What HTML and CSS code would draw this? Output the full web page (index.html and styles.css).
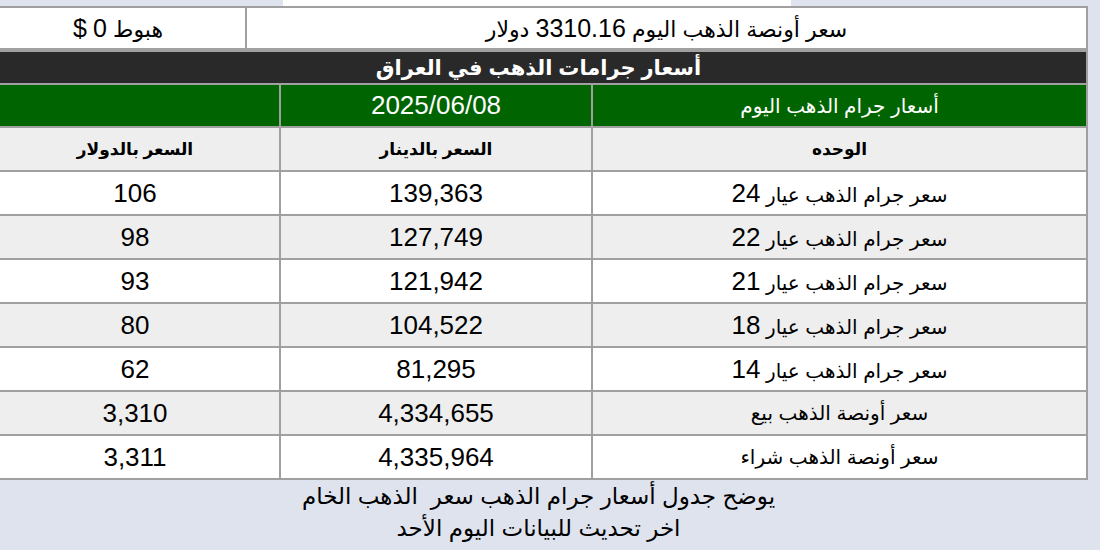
FILE: index.html
```html
<!DOCTYPE html>
<html lang="ar" dir="rtl">
<head>
<meta charset="utf-8">
<title>أسعار جرامات الذهب في العراق</title>
<link rel="stylesheet" href="styles.css">
</head>
<body>
<div class="topstrip"><div class="topstrip-white"></div></div>
<div class="wrap">
  <table class="ounce">
    <colgroup><col class="col-price"><col></colgroup>
    <tr>
      <td class="ounce-price">سعر أونصة الذهب اليوم <span class="n">3310.16</span> دولار</td>
      <td class="ounce-change">هبوط <span class="n">0</span> <span class="n">$</span></td>
    </tr>
  </table>
  <table class="prices">
    <colgroup><col class="col-unit"><col class="col-iqd"><col></colgroup>
    <tr class="title-row"><td colspan="3">أسعار جرامات الذهب في العراق</td></tr>
    <tr class="green-row">
      <td>أسعار جرام الذهب اليوم</td>
      <td class="n">2025/06/08</td>
      <td></td>
    </tr>
    <tr class="head-row alt">
      <td>الوحده</td>
      <td>السعر بالدينار</td>
      <td>السعر بالدولار</td>
    </tr>
    <tr><td>سعر جرام الذهب عيار <span class="n">24</span></td><td class="n">139,363</td><td class="n">106</td></tr>
    <tr class="alt"><td>سعر جرام الذهب عيار <span class="n">22</span></td><td class="n">127,749</td><td class="n">98</td></tr>
    <tr><td>سعر جرام الذهب عيار <span class="n">21</span></td><td class="n">121,942</td><td class="n">93</td></tr>
    <tr class="alt"><td>سعر جرام الذهب عيار <span class="n">18</span></td><td class="n">104,522</td><td class="n">80</td></tr>
    <tr><td>سعر جرام الذهب عيار <span class="n">14</span></td><td class="n">81,295</td><td class="n">62</td></tr>
    <tr class="alt"><td>سعر أونصة الذهب بيع</td><td class="n">4,334,655</td><td class="n">3,310</td></tr>
    <tr><td>سعر أونصة الذهب شراء</td><td class="n">4,335,964</td><td class="n">3,311</td></tr>
  </table>
  <div class="caption">
    <p>يوضح جدول أسعار جرام الذهب سعر&nbsp; الذهب الخام</p>
    <p>اخر تحديث للبيانات اليوم الأحد</p>
  </div>
</div>
</body>
</html>
```

FILE: styles.css
```css
html, body {
  margin: 0;
  padding: 0;
}
body {
  background: #dfe3ee;
  font-family: "Liberation Sans", "DejaVu Sans", Arial, sans-serif;
  color: #000;
  overflow: hidden;
}
.topstrip {
  height: 6px;
  display: flex;
}
.topstrip-white {
  width: 508px;
  margin-right: 309px;
  background: #ffffff;
}
.wrap {
  width: 1099px;
  margin-right: 12px;
}
table {
  border-collapse: collapse;
  width: 100%;
  table-layout: fixed;
}
td {
  border: 2px solid #a0a0a0;
  padding: 0;
  text-align: center;
  vertical-align: middle;
  font-size: 20px;
  white-space: nowrap;
}
.n {
  font-size: 26px;
}
.ounce {
  background: #ffffff;
}
.ounce .col-price { width: 841px; }
.ounce td {
  height: 40px;
  font-size: 22px;
}
.ounce td .n {
  font-size: 25px;
}
.prices .col-unit { width: 495px; }
.prices .col-iqd { width: 312px; }
.prices td {
  height: 42px;
}
.prices tr {
  background: #ffffff;
}
.prices tr.alt {
  background: #eeeeee;
}
.title-row td {
  background: #292929;
  color: #ffffff;
  font-weight: bold;
  font-size: 21px;
  height: 31px;
}
.green-row td {
  background: #006400;
  color: #ffffff;
  height: 41px;
  font-size: 20px;
}
.green-row td.n {
  font-size: 26px;
}
.head-row td {
  font-weight: bold;
  font-size: 17px;
}
.caption {
  text-align: center;
  font-size: 23px;
  line-height: 32px;
}
.caption p {
  margin: 0;
}
```
